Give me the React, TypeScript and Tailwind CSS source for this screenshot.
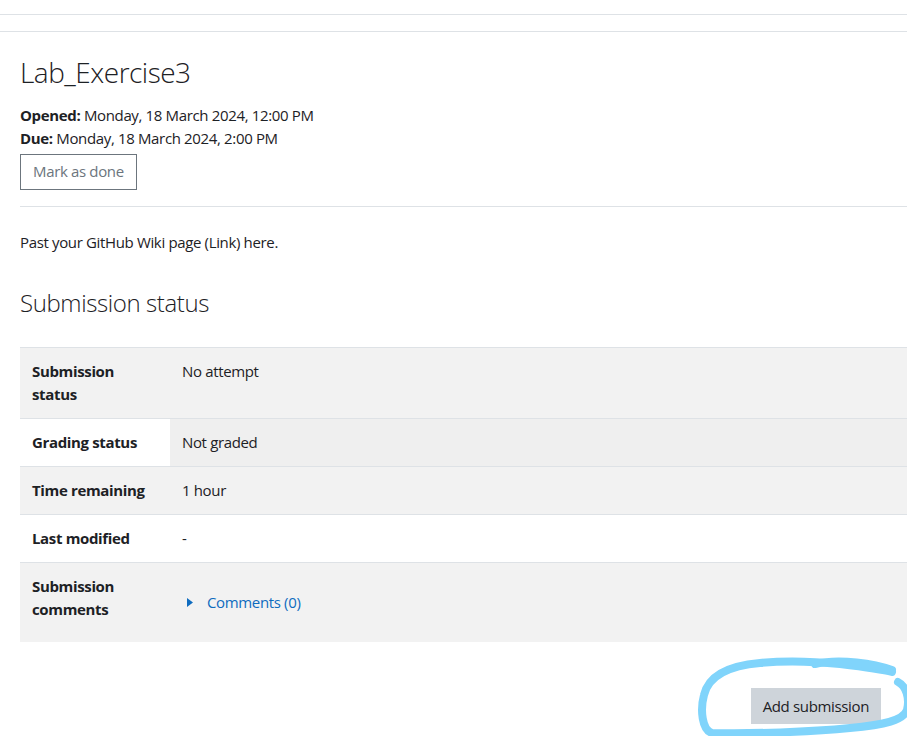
import React from "react";

const font = { fontFamily: '"Open Sans", "Noto Sans", "Liberation Sans", sans-serif' };

type Row = {
  label: React.ReactNode;
  value: React.ReactNode;
  rowBg: string;
  thBg?: string;
  tdBg?: string;
  tall?: boolean;
};

const rows: Row[] = [
  {
    label: (
      <>
        Submission
        <br />
        status
      </>
    ),
    value: "No attempt",
    rowBg: "bg-[#f2f2f2]",
  },
  {
    label: "Grading status",
    value: "Not graded",
    rowBg: "bg-white",
    tdBg: "bg-[#efefef]",
  },
  { label: "Time remaining", value: "1 hour", rowBg: "bg-[#f2f2f2]" },
  { label: "Last modified", value: "-", rowBg: "bg-white" },
  {
    label: (
      <>
        Submission
        <br />
        comments
      </>
    ),
    value: (
      <a href="#" className="flex items-center text-[#0f6cbf]">
        <svg width="6" height="9" viewBox="0 0 6 9" className="ml-[5px] mr-[14px]">
          <path d="M0 0 L6 4.5 L0 9 Z" fill="#0f6cbf" />
        </svg>
        Comments (0)
      </a>
    ),
    rowBg: "bg-[#f2f2f2]",
    tall: true,
  },
];

export default function App() {
  return (
    <div
      className="relative min-h-[736px] bg-white text-[#1d2125] tracking-[-0.35px] overflow-hidden"
      style={font}
    >
      {/* top nav lines */}
      <div className="h-[15px] border-b border-[#dee2e6]" />
      <div className="h-[17px] border-b border-[#dee2e6]" />

      <div className="pl-5">
        <h2 className="mt-[24px] text-[28px] font-light leading-[1.2] tracking-[-0.5px]">Lab_Exercise3</h2>

        <div className="mt-[14px] text-[15px] leading-[23px]">
          <div>
            <span className="font-bold">Opened:</span> Monday, 18 March 2024, 12:00 PM
          </div>
          <div>
            <span className="font-bold">Due:</span> Monday, 18 March 2024, 2:00 PM
          </div>
        </div>

        <button className="mt-[4px] h-[36px] border border-[#6c757d] px-3 text-[15px] text-[#6c757d]">
          Mark as done
        </button>

        <div className="mt-[16px] border-t border-[#dee2e6]" />

        <p className="mt-[24px] text-[15px] leading-[23px]">Past your GitHub Wiki page (Link) here.</p>

        <h3 className="mt-[35px] text-[24px] font-light leading-[1.2] tracking-[-0.4px]">Submission status</h3>

        <table className="mt-[30px] w-[1000px] border-collapse text-[15px] leading-[23px]">
          <tbody>
            {rows.map((r, i) => (
              <tr key={i} className={`${r.rowBg} border-t border-[#dee2e6] ${r.tall ? "h-[79px]" : ""}`}>
                <th
                  className={`w-[150px] px-3 py-3 text-left align-top font-bold ${r.thBg ?? ""}`}
                >
                  {r.label}
                </th>
                <td className={`px-3 py-3 ${r.tall ? "align-middle" : "align-top"} ${r.tdBg ?? ""}`}>
                  {r.value}
                </td>
              </tr>
            ))}
          </tbody>
        </table>

        <div className="mt-[46px] flex justify-end pr-[26px]">
          <button className="h-[36px] bg-[#ced4da] px-3 text-[15px] text-[#1d2125]">Add submission</button>
        </div>
      </div>

      {/* hand-drawn highlight around the button */}
      <svg
        className="pointer-events-none absolute left-[690px] top-[650px]"
        width="217"
        height="86"
        viewBox="0 0 217 86"
        fill="none"
      >
        <path
          d="M208 32 C216 36 220 48 217 60 C214 70 195 75 160 78 C120 82 60 84 22 83 C12 80 10 60 14 45 C18 28 35 16 70 13 C100 10 130 12 150 14 C175 17 195 20 202 22"
          stroke="#80d4fb"
          strokeWidth="8"
          strokeLinecap="round"
          strokeLinejoin="round"
        />
        <path
          d="M125 14 C150 8 185 14 202 20"
          stroke="#80d4fb"
          strokeWidth="8"
          strokeLinecap="round"
        />
      </svg>
    </div>
  );
}
